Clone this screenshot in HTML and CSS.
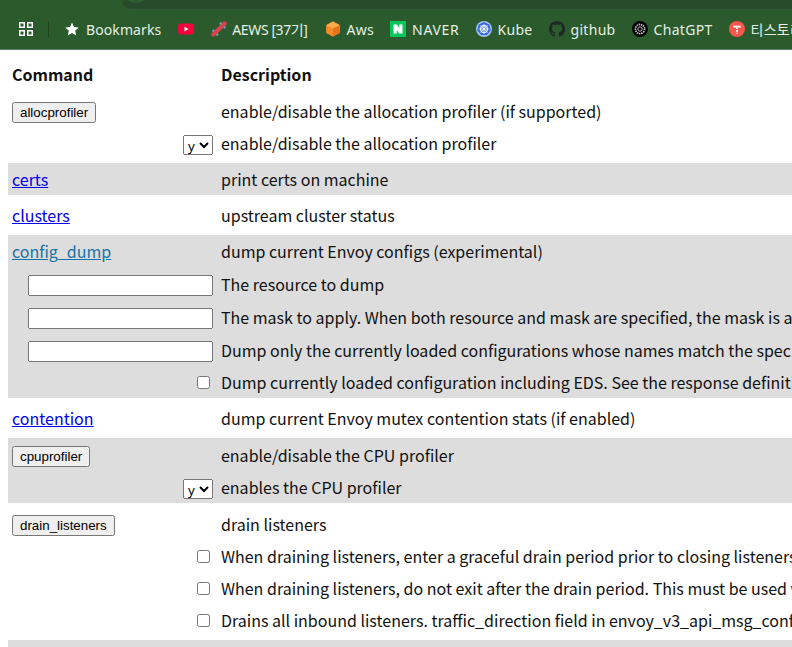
FILE: index.html
```html
<!DOCTYPE html>
<html lang="en">
<head>
<meta charset="utf-8">
<title>Envoy Admin</title>
<link rel="stylesheet" href="styles.css">
</head>
<body>
<header class="chrome">
  <div class="omni-edge"><span class="omni-dot"></span></div>
  <nav class="bookmarks">
    <svg class="apps" viewBox="0 0 14 14" width="14" height="14"><g fill="none" stroke="#fff" stroke-width="1.5"><rect x=".75" y=".75" width="4.5" height="4.5"/><rect x="8.75" y=".75" width="4.5" height="4.5"/><rect x=".75" y="8.75" width="4.5" height="4.5"/><rect x="8.75" y="8.75" width="4.5" height="4.5"/></g></svg>
    <span class="sep"></span>
    <a class="bm first"><svg viewBox="0 0 14 14" width="14" height="14"><path fill="#fff" d="M7 .6l2 4.4 4.7.5-3.5 3.2 1 4.7L7 11.1l-4.2 2.3 1-4.7L.3 5.5 5 5z"/></svg>Bookmarks</a>
    <a class="bm loose"><svg viewBox="0 0 16 16" width="16" height="16"><rect y="2.5" width="16" height="11" rx="3" fill="#f5003c"/><path fill="#fff" d="M6.5 5.8v4.6l4-2.3z"/></svg></a>
    <a class="bm loose tight"><svg viewBox="0 0 16 16" width="16" height="16"><g transform="rotate(45 8 8)"><rect x="5.9" y="-2" width="4.2" height="20" rx="2.1" fill="#d8434e"/><rect x="4.4" y="1.5" width="1.5" height="2.6" fill="#6fa8c8"/><rect x="10.1" y="1.5" width="1.5" height="2.6" fill="#6fa8c8"/><rect x="4.4" y="11.9" width="1.5" height="2.6" fill="#6fa8c8"/><rect x="10.1" y="11.9" width="1.5" height="2.6" fill="#6fa8c8"/></g></svg>AEWS [37기]</a>
    <a class="bm loose"><svg viewBox="0 0 16 16" width="16" height="16"><path fill="#f68b2c" stroke="#f68b2c" stroke-linejoin="round" d="M8 .8l6.4 3.4v7.6L8 15.2l-6.4-3.4V4.200z"/><path fill="#fbab4e" d="M8 .8l6.4 3.4L8 7.600 1.600 4.200z"/><path fill="#e8711c" d="M8 7.600l6.4-3.400v7.600L8 15.200z"/></svg>Aws</a>
    <a class="bm spread"><svg viewBox="0 0 16 16" width="16" height="16"><rect width="16" height="16" fill="#03c75a"/><path fill="#fff" d="M3.5 3.5h3.4l2.3 3.6V3.5h3.3v9H9.1L6.8 8.900v3.600H3.500z"/></svg>NAVER</a>
    <a class="bm"><svg viewBox="0 0 16 16" width="16" height="16"><circle cx="8" cy="8" r="8" fill="#a9c0f2"/><path fill="#326ce5" d="M8 1l5.400 2.600 1.300 5.800-3.700 4.600H5L1.300 9.400l1.300-5.800z"/><circle cx="8" cy="8" r="3.400" fill="none" stroke="#fff" stroke-width="1.100"/><path stroke="#fff" stroke-width=".8" d="M8 3v10M3 8h10M4.500 4.500l7 7M11.500 4.500l-7 7"/></svg>Kube</a>
    <a class="bm"><svg viewBox="0 0 16 16" width="16" height="16"><path fill="#1d2a26" d="M8 0C3.58 0 0 3.58 0 8c0 3.54 2.29 6.53 5.47 7.59.4.07.55-.17.55-.38 0-.19-.01-.82-.01-1.49-2.01.37-2.53-.49-2.69-.94-.09-.23-.48-.94-.82-1.13-.28-.15-.68-.52-.01-.53.63-.01 1.08.58 1.23.82.72 1.21 1.87.87 2.33.66.07-.52.28-.87.51-1.07-1.78-.2-3.64-.89-3.64-3.95 0-.87.31-1.59.82-2.15-.08-.2-.36-1.02.08-2.12 0 0 .67-.21 2.2.82.64-.18 1.32-.27 2-.27s1.36.09 2 .27c1.53-1.04 2.2-.82 2.2-.82.44 1.1.16 1.92.08 2.12.51.56.82 1.27.82 2.15 0 3.07-1.87 3.75-3.65 3.95.29.25.54.73.54 1.48 0 1.07-.01 1.93-.01 2.2 0 .21.15.46.55.38A8.01 8.01 0 0 0 16 8c0-4.42-3.58-8-8-8z"/></svg>github</a>
    <a class="bm"><svg viewBox="0 0 16 16" width="16" height="16"><circle cx="8" cy="8" r="8" fill="#000"/><circle cx="8" cy="8" r="4.600" fill="none" stroke="#cfcfcf" stroke-width="1.600" stroke-dasharray="1.400 .8"/><circle cx="8" cy="8" r="2.200" fill="none" stroke="#bbb" stroke-width="1"/></svg>ChatGPT</a>
    <a class="bm"><svg viewBox="0 0 16 16" width="16" height="16"><circle cx="8" cy="8" r="8" fill="#f9554a"/><path stroke="#fff" stroke-width="1.800" d="M4.200 5.600h7.600"/><path stroke="#fff" stroke-width="1.800" stroke-dasharray="1.600 1" d="M8 6.500v6"/></svg>티스토리</a>
  </nav>
</header>
<main class="viewport">
  <table class="home-table">
    <thead>
      <tr><th>Command</th><th>Description</th></tr>
    </thead>
    <tbody>
      <tr class="spacer"><td colspan="2"></td></tr>
      <tr><td><button class="cmd">allocprofiler</button></td><td>enable/disable the allocation profiler (if supported)</td></tr>
      <tr><td><select class="pick"><option>y</option><option>n</option></select></td><td>enable/disable the allocation profiler</td></tr>
      <tr class="spacer"><td colspan="2"></td></tr>
      <tr class="shade"><td><a class="link" href="#certs">certs</a></td><td>print certs on machine</td></tr>
      <tr class="spacer"><td colspan="2"></td></tr>
      <tr><td><a class="link" href="#clusters">clusters</a></td><td>upstream cluster status</td></tr>
      <tr class="spacer"><td colspan="2"></td></tr>
      <tr class="shade tall"><td><a class="link seen" href="#config_dump">config_dump</a></td><td>dump current Envoy configs (experimental)</td></tr>
      <tr class="shade tall"><td><input class="field" type="text"></td><td>The resource to dump</td></tr>
      <tr class="shade tall"><td><input class="field" type="text"></td><td>The mask to apply. When both resource and mask are specified, the mask is applied to every element in the desired repeated field so that only a subset of fields are returned.</td></tr>
      <tr class="shade"><td><input class="field" type="text"></td><td>Dump only the currently loaded configurations whose names match the specified regex. Can be used with both resource and mask query parameters.</td></tr>
      <tr class="shade"><td><input class="tick" type="checkbox"></td><td>Dump currently loaded configuration including EDS. See the response definition for more information</td></tr>
      <tr class="spacer"><td colspan="2"></td></tr>
      <tr><td><a class="link" href="#contention">contention</a></td><td>dump current Envoy mutex contention stats (if enabled)</td></tr>
      <tr class="spacer"><td colspan="2"></td></tr>
      <tr class="shade tall lead"><td><button class="cmd">cpuprofiler</button></td><td>enable/disable the CPU profiler</td></tr>
      <tr class="shade"><td><select class="pick"><option>y</option><option>n</option></select></td><td>enables the CPU profiler</td></tr>
      <tr class="spacer"><td colspan="2"></td></tr>
      <tr class="tall lead"><td><button class="cmd">drain_listeners</button></td><td>drain listeners</td></tr>
      <tr><td><input class="tick" type="checkbox"></td><td>When draining listeners, enter a graceful drain period prior to closing listeners. This behaviour and duration is configurable via server options or CLI</td></tr>
      <tr><td><input class="tick" type="checkbox"></td><td>When draining listeners, do not exit after the drain period. This must be used with graceful</td></tr>
      <tr><td><input class="tick" type="checkbox"></td><td>Drains all inbound listeners. traffic_direction field in envoy_v3_api_msg_config.listener.v3.Listener is used to determine whether a listener is inbound or outbound.</td></tr>
      <tr class="spacer"><td colspan="2"></td></tr>
      <tr class="shade"><td><button class="cmd">healthcheck/fail</button></td><td>cause the server to fail health checks</td></tr>
    </tbody>
  </table>
</main>
</body>
</html>
```
FILE: styles.css
```css
html, body {
  margin: 0;
  height: 100%;
  overflow: hidden;
  background: #fff;
}
body {
  font-family: "Noto Sans CJK KR", "Noto Sans", sans-serif;
  font-size: 16px;
  color: #111;
  display: flex;
  flex-direction: column;
}

/* browser bookmark bar */
.chrome {
  flex: none;
  height: 50px;
  box-sizing: border-box;
  background: #2b5b2c;
  border-bottom: 1px solid #5e7f5e;
  overflow: hidden;
}
.omni-edge {
  height: 9px;
  margin-left: 122px;
  background: #284b2b;
  border-bottom-left-radius: 10px;
  position: relative;
}
.omni-dot {
  position: absolute;
  left: 4px;
  top: -12px;
  width: 20px;
  height: 15px;
  border-radius: 50%;
  background: #2f5f30;
}
.bookmarks {
  display: flex;
  align-items: center;
  height: 40px;
  padding-left: 19px;
  font-family: "Noto Sans", "Noto Sans CJK KR", sans-serif;
  font-size: 14px;
  letter-spacing: .3px;
  color: #e6efe6;
  white-space: nowrap;
}
.apps { flex: none; }
.sep {
  flex: none;
  width: 1px;
  height: 16px;
  margin-left: 15px;
  background: #1f4321;
}
.bm {
  display: flex;
  align-items: center;
  gap: 6px;
  margin-left: 16px;
  flex: none;
}
.bm svg { flex: none; }
.bm.loose { margin-left: 17px; }
.bm.first { gap: 7px; letter-spacing: .1px; }
.bm.tight { gap: 5px; letter-spacing: -.4px; }
.bm.spread { letter-spacing: .7px; }

/* admin table */
.viewport {
  flex: 1;
  min-height: 0;
  overflow: hidden;
  padding: 8px 0 0 8px;
}
.home-table {
  border-collapse: collapse;
  white-space: nowrap;
  line-height: 23px;
}
.home-table th {
  text-align: left;
  font-weight: 700;
  box-sizing: border-box;
  height: 33px;
  padding: 5px 4px 4px;
  vertical-align: top;
}
.home-table td {
  box-sizing: border-box;
  height: 32px;
  padding: 5px 4px 4px;
  vertical-align: top;
}
.home-table .spacer td {
  height: 4px;
  padding: 0;
  line-height: 0;
}
.home-table .tall td { height: 33px; }
.home-table .lead td { padding-top: 6px; }
.shade { background: #dddddd; }
.link { color: #0000ee; }
.link.seen { color: #1673a8; }
.cmd {
  display: block;
  box-sizing: border-box;
  height: 21px;
  margin-top: 2px;
  font-family: "Liberation Sans", Arial, sans-serif;
  font-size: 13.33px;
}
.field {
  display: block;
  box-sizing: border-box;
  width: 185px;
  height: 21px;
  margin: 2px 0 0 16px;
}
.pick {
  display: block;
  box-sizing: border-box;
  width: 30px;
  height: 20px;
  padding: 0;
  margin: 3px 0 0 auto;
  font-family: "Noto Sans", sans-serif;
  font-size: 13.33px;
}
.tick {
  display: block;
  margin: 5px 3px 0 auto;
}
```
